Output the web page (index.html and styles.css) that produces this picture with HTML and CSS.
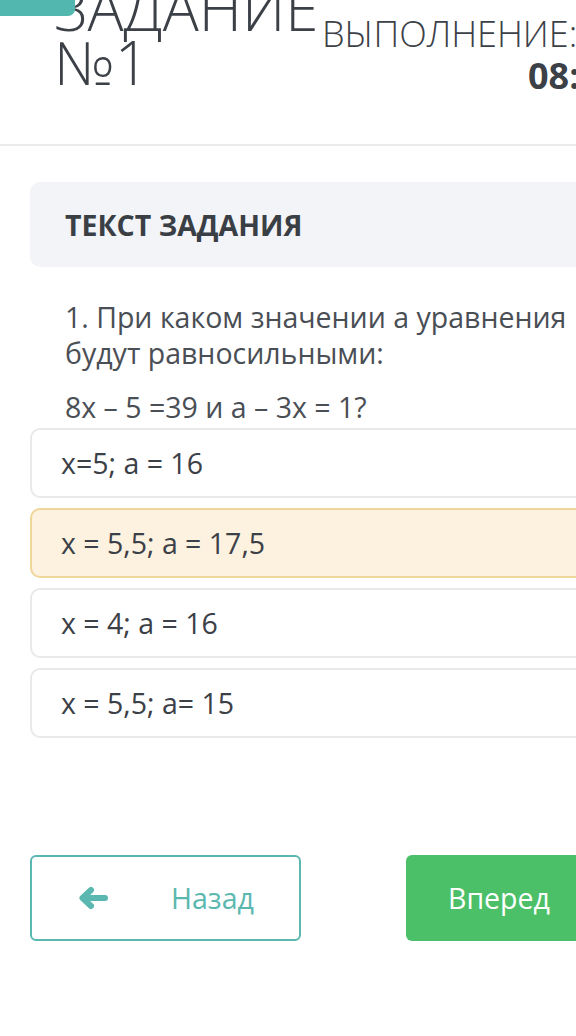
FILE: index.html
```html
<!DOCTYPE html>
<html lang="ru">
<head>
  <meta charset="UTF-8">
  <meta name="viewport" content="width=device-width, initial-scale=1.0">
  <title>Задание №1</title>
  <link rel="stylesheet" href="styles.css">
</head>
<body>
  <div class="tab"></div>
  <div class="page">
    <div class="header">
      <h1 class="title">ЗАДАНИЕ<br>№1</h1>
      <div class="timer">
        <div class="timer-label">ВЫПОЛНЕНИЕ:</div>
        <div class="timer-value">08:00</div>
      </div>
    </div>

    <div class="task-head">ТЕКСТ ЗАДАНИЯ</div>

    <div class="question">
      <p>1. При каком значении а уравнения будут равносильными:</p>
      <p>8x – 5 =39 и а – 3x = 1?</p>
    </div>

    <div class="answers">
      <div class="answer">x=5; a = 16</div>
      <div class="answer selected">x = 5,5; a = 17,5</div>
      <div class="answer">x = 4; a = 16</div>
      <div class="answer">x = 5,5; a= 15</div>
    </div>

    <div class="nav">
      <button class="btn btn-back">
        <svg class="arrow" width="30" height="22" viewBox="0 0 30 22">
          <path d="M27 11H6M13 3L4.5 11L13 19" fill="none" stroke="#5bb8b0" stroke-width="6" stroke-linecap="round" stroke-linejoin="round"/>
        </svg>
        <span>Назад</span>
      </button>
      <button class="btn btn-next">Вперед</button>
    </div>
  </div>
</body>
</html>
```

FILE: styles.css
```css
body {
  margin: 0;
  font-family: "Open Sans", Arial, sans-serif;
  background-color: #fff;
  color: #3c4047;
  overflow: hidden;
}

.tab {
  position: absolute;
  top: 0;
  left: 0;
  z-index: 1;
  width: 75px;
  height: 16px;
  background-color: #52b7ae;
  border-bottom-right-radius: 7px;
}

.page {
  width: 760px;
}

.header {
  display: flex;
  align-items: flex-start;
  margin-top: -19px;
  padding-left: 54px;
  height: 165px;
  border-bottom: 2px solid #ebebeb;
  box-sizing: border-box;
}

.title {
  margin: 0;
  width: 268px;
  font-size: 60px;
  font-weight: 300;
  line-height: 54px;
  color: #3c4047;
}

.timer {
  padding-top: 32px;
  font-size: 36px;
  font-weight: 300;
  line-height: 42px;
}

.timer-value {
  margin-left: 206px;
  font-weight: 700;
}

.task-head {
  margin: 36px 0 0 30px;
  height: 85px;
  padding-left: 35px;
  display: flex;
  align-items: center;
  background-color: #f2f4f7;
  border-radius: 10px;
  font-size: 28.5px;
  font-weight: 700;
  color: #3a3e45;
}

.question {
  padding-left: 65px;
  margin-top: 32px;
  font-size: 28.5px;
  line-height: 36px;
  color: #4a4e55;
}

.question p {
  margin: 0 0 18px;
  width: 560px;
}

.question p:last-child {
  margin-bottom: 0;
}

.answers {
  margin: 3px 0 0 30px;
}

.answer {
  height: 70px;
  box-sizing: border-box;
  display: flex;
  align-items: center;
  padding-left: 29px;
  margin-bottom: 10px;
  border: 2px solid #e7e9eb;
  border-radius: 10px;
  font-size: 28.5px;
  color: #3c4047;
}

.answer.selected {
  background-color: #fcf2df;
  border-color: #efd699;
}

.nav {
  display: flex;
  gap: 105px;
  margin: 117px 0 0 30px;
}

.btn {
  width: 271px;
  height: 86px;
  border-radius: 6px;
  font-family: "Open Sans", Arial, sans-serif;
  font-size: 28.5px;
  cursor: pointer;
}

.btn-back {
  display: flex;
  align-items: center;
  padding-left: 46px;
  gap: 63px;
  background-color: #fff;
  border: 2px solid #5bb8b0;
  color: #5bb8b0;
}

.btn-next {
  background-color: #4cbf69;
  border: none;
  color: #fff;
  text-align: left;
  padding-left: 42px;
}
```
